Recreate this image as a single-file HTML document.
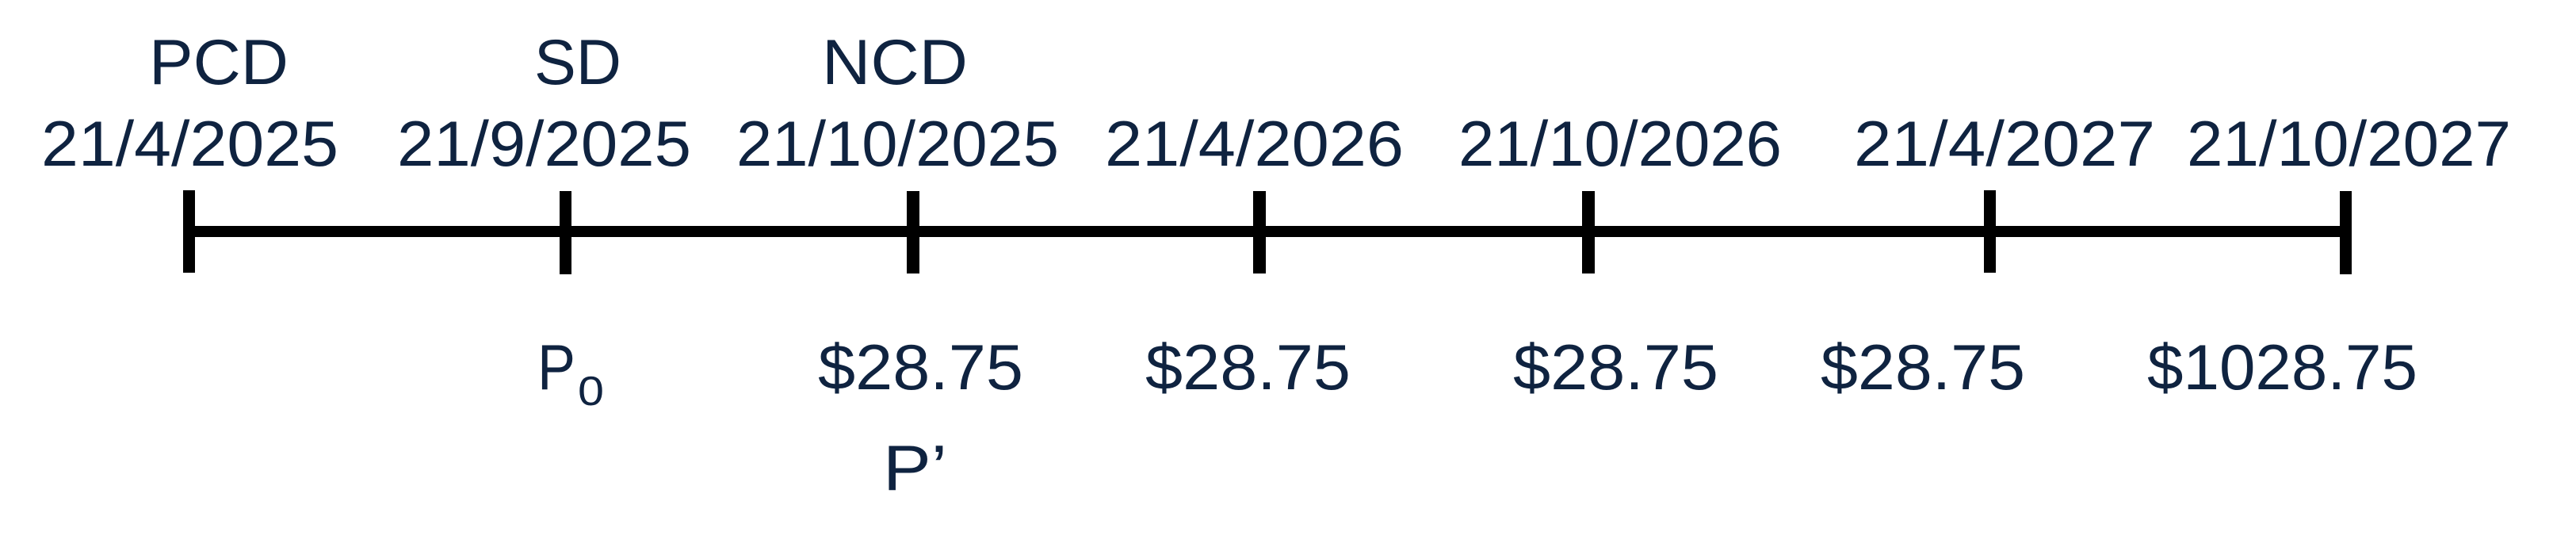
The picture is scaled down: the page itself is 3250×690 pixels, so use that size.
<!DOCTYPE html>
<html><head><style>html,body{margin:0;padding:0;background:#fff;}svg{display:block}</style></head>
<body>
<svg width="3250" height="690" viewBox="0 0 3250 690" xmlns="http://www.w3.org/2000/svg">
<g fill="#0f2340" font-family="Liberation Sans, sans-serif" font-size="81" lengthAdjust="spacingAndGlyphs">
<text x="188" y="106" textLength="176" lengthAdjust="spacingAndGlyphs">PCD</text>
<text x="674" y="106" textLength="110" lengthAdjust="spacingAndGlyphs">SD</text>
<text x="1037" y="106" textLength="184" lengthAdjust="spacingAndGlyphs">NCD</text>
<text x="52" y="209" textLength="375" lengthAdjust="spacingAndGlyphs">21/4/2025</text>
<text x="501" y="209" textLength="371" lengthAdjust="spacingAndGlyphs">21/9/2025</text>
<text x="929" y="209" textLength="407" lengthAdjust="spacingAndGlyphs">21/10/2025</text>
<text x="1394" y="209" textLength="377" lengthAdjust="spacingAndGlyphs">21/4/2026</text>
<text x="1840" y="209" textLength="408" lengthAdjust="spacingAndGlyphs">21/10/2026</text>
<text x="2339" y="209" textLength="380" lengthAdjust="spacingAndGlyphs">21/4/2027</text>
<text x="2759" y="209" textLength="409" lengthAdjust="spacingAndGlyphs">21/10/2027</text>
<text x="678" y="491" textLength="48" lengthAdjust="spacingAndGlyphs">P</text>
<text x="729" y="511" font-size="52" textLength="33" lengthAdjust="spacingAndGlyphs">0</text>
<text x="1032" y="491" textLength="259" lengthAdjust="spacingAndGlyphs">$28.75</text>
<text x="1445" y="491" textLength="259" lengthAdjust="spacingAndGlyphs">$28.75</text>
<text x="1909" y="491" textLength="259" lengthAdjust="spacingAndGlyphs">$28.75</text>
<text x="2297" y="491" textLength="258" lengthAdjust="spacingAndGlyphs">$28.75</text>
<text x="2709" y="491" textLength="341" lengthAdjust="spacingAndGlyphs">$1028.75</text>
<text x="1114" y="618" textLength="81" lengthAdjust="spacingAndGlyphs">P’</text>
</g>
<g fill="#000">
<rect x="231" y="285" width="2736" height="14"/>
<rect x="231" y="240" width="15" height="104"/>
<rect x="706" y="241" width="15" height="105"/>
<rect x="1144" y="241" width="16" height="104"/>
<rect x="1581" y="241" width="16" height="104"/>
<rect x="1996" y="241" width="16" height="104"/>
<rect x="2503" y="240" width="15" height="104"/>
<rect x="2952" y="241" width="15" height="105"/>
</g>
</svg>
</body></html>
